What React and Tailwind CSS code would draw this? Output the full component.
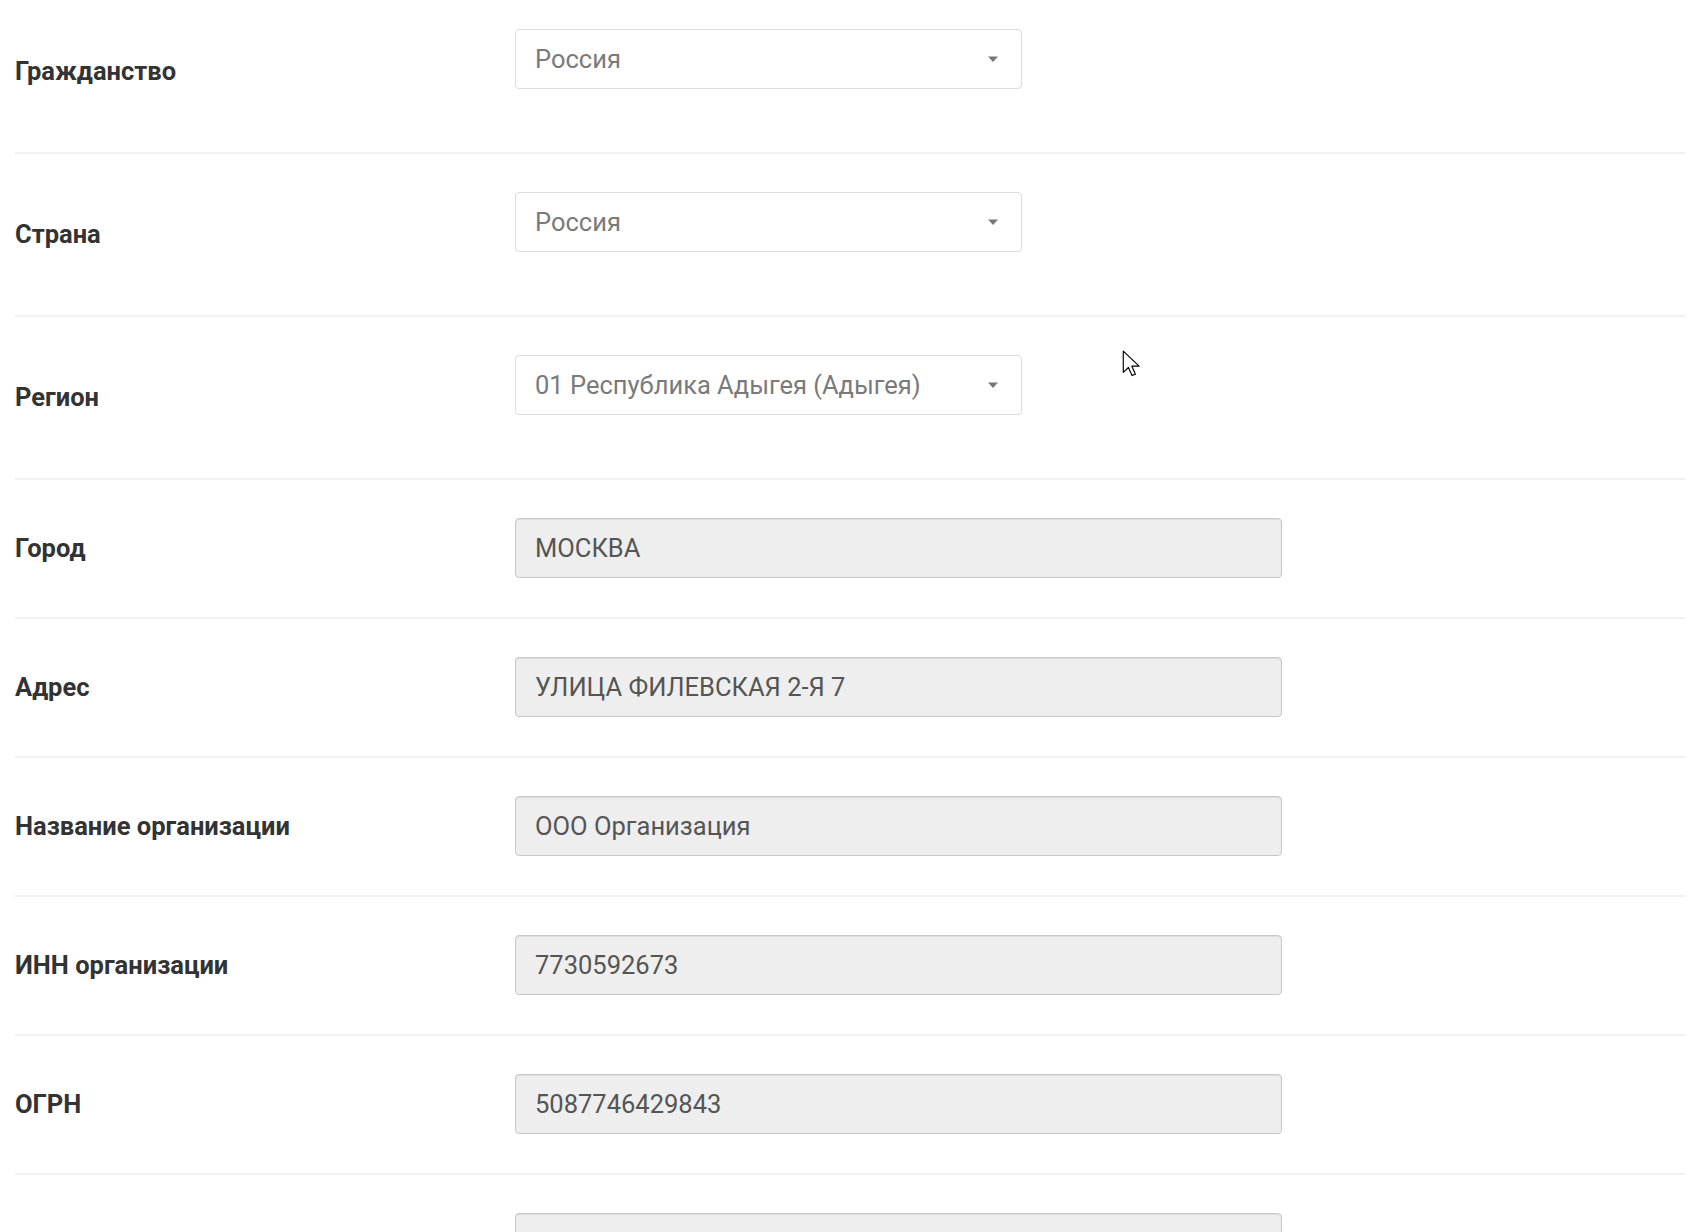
import React from 'react';

const rows = [
  { label: 'Гражданство', value: 'Россия', type: 'select' },
  { label: 'Страна', value: 'Россия', type: 'select' },
  { label: 'Регион', value: '01 Республика Адыгея (Адыгея)', type: 'select' },
  { label: 'Город', value: 'МОСКВА', type: 'input' },
  { label: 'Адрес', value: 'УЛИЦА ФИЛЕВСКАЯ 2-Я 7', type: 'input' },
  { label: 'Название организации', value: 'ООО Организация', type: 'input' },
  { label: 'ИНН организации', value: '7730592673', type: 'input' },
  { label: 'ОГРН', value: '5087746429843', type: 'input' },
  { label: '', value: '', type: 'input' },
];

const Caret = () => (
  <svg width="12" height="7" viewBox="0 0 12 7" className="shrink-0">
    <path d="M1 0.5h10L6 6z" fill="#777" />
  </svg>
);

const SelectBox = ({ value }) => (
  <div className="mb-[24px] flex h-[60px] w-[507px] items-center justify-between rounded-[4px] border border-[#dcdcdc] bg-white pl-[19px] pr-[22px]">
    <span className="text-[25.5px] text-[#7a7a7a]">{value}</span>
    <Caret />
  </div>
);

const InputBox = ({ value }) => (
  <div className="flex h-[60px] w-[767px] items-center rounded-[4px] border border-[#c8c8c8] bg-[#eeeeee] pl-[19px] shadow-[inset_0_1px_1px_rgba(0,0,0,0.075)]">
    <span className="text-[25.5px] text-[#555]">{value}</span>
  </div>
);

const Cursor = () => (
  <svg width="18" height="30" viewBox="0 0 14 22" className="absolute left-[1122px] top-[349px]">
    <path
      d="M1 1v16.5l4-3.8 2.8 6.3 2.6-1.1-2.7-6.2h5.6z"
      fill="#fff"
      stroke="#000"
      strokeWidth="0.9"
      strokeLinejoin="round"
    />
  </svg>
);

export default function App() {
  return (
    <div className="relative h-[1232px] overflow-hidden bg-white font-['Roboto',_'Liberation_Sans',sans-serif]">
      <div className="ml-[15px] mr-[15px]">
        {rows.map((row, i) => (
          <div
            key={i}
            className={`flex items-center border-b-2 border-[#f1f1f1] pb-[39px] ${i === 0 ? 'pt-[29px]' : 'pt-[38px]'}`}
          >
            <div className="w-[500px] shrink-0 text-[25.5px] font-bold text-[#333]">{row.label}</div>
            <div>
              {row.type === 'select' ? <SelectBox value={row.value} /> : <InputBox value={row.value} />}
            </div>
          </div>
        ))}
      </div>
      <Cursor />
    </div>
  );
}
